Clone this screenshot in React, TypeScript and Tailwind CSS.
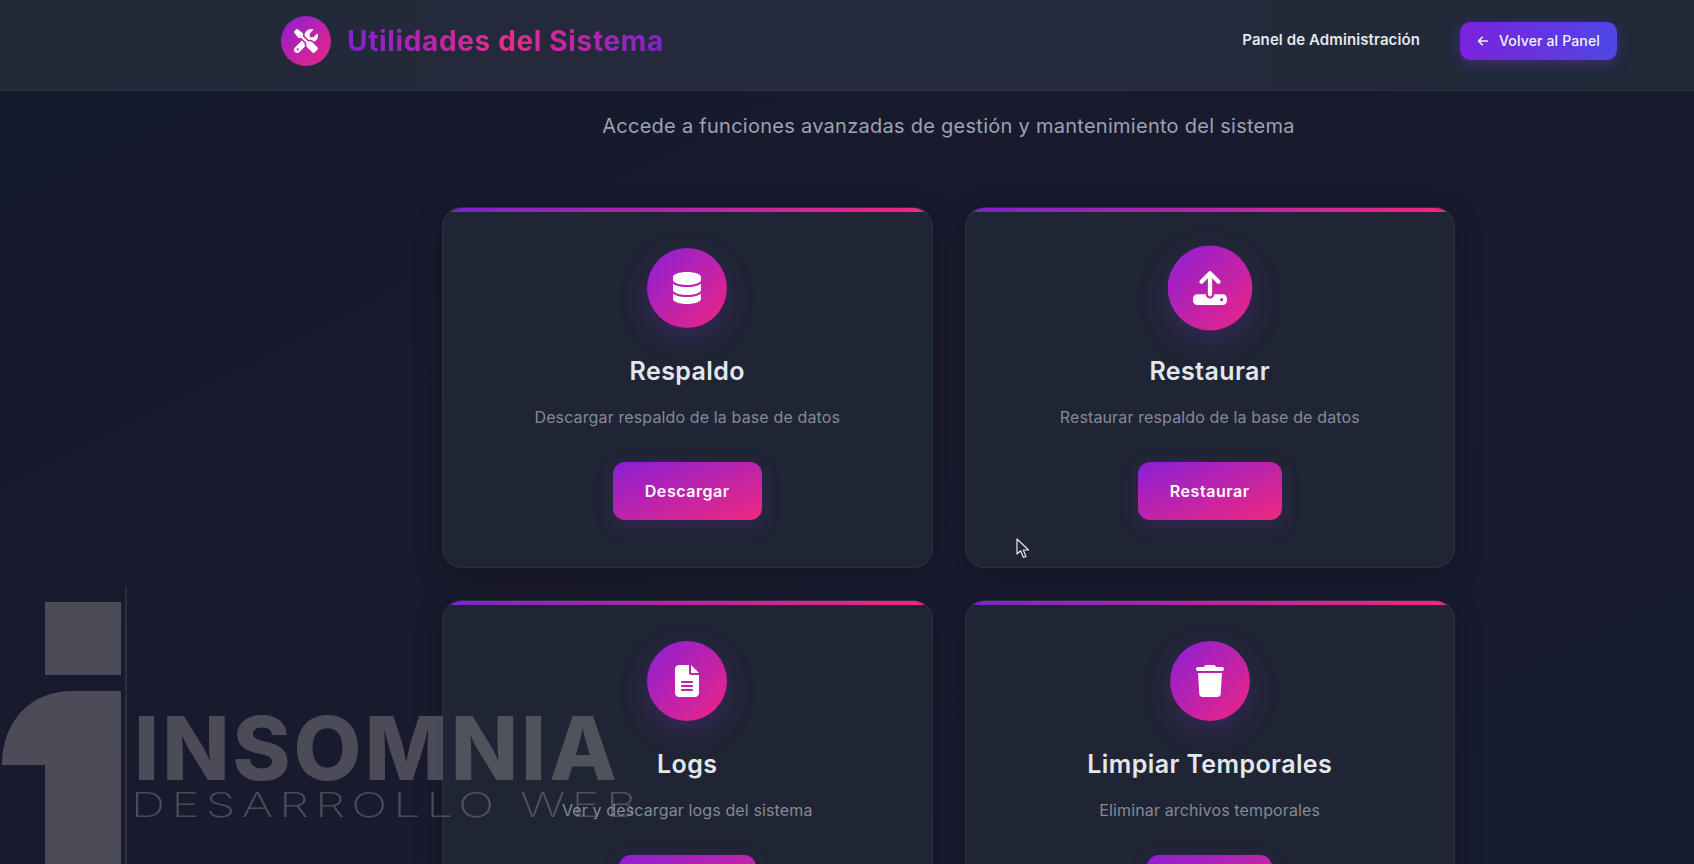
import { ReactNode } from 'react'
import {
  FaArrowLeft,
  FaDatabase,
  FaFileLines,
  FaScrewdriverWrench,
  FaTrash,
  FaUpload
} from 'react-icons/fa6'

interface UtilityCardProps {
  icon: ReactNode
  title: string
  description: string
  action: string
  active?: boolean
}

function UtilityCard({ icon, title, description, action, active }: UtilityCardProps) {
  return (
    <div className="relative flex h-[361px] flex-col items-center overflow-hidden rounded-[20px] border border-white/[0.06] bg-[#1f2534] pt-[40px] shadow-[0_8px_28px_rgba(0,0,0,0.25)]">
      <span className="absolute inset-x-0 top-0 h-1 bg-linear-to-r/srgb from-[#7e22ce] to-[#f0287f]" />
      <div
        className={`flex h-20 w-20 shrink-0 items-center justify-center rounded-full bg-linear-to-br/srgb from-[#8b1fd6] to-[#ee2582] text-[32px] text-white shadow-[0_10px_30px_rgba(147,51,234,0.22)] ${active ? 'scale-[1.06]' : ''}`}
      >
        {icon}
      </div>
      <h3 className="mt-[25px] text-[25px] leading-9 font-semibold tracking-[0.4px] text-[#e5e7eb]">
        {title}
      </h3>
      <p className="mt-[16px] text-[16px] leading-6 tracking-[0.13px] text-[#858a96]">
        {description}
      </p>
      <button className="mt-[33px] flex h-[58px] items-center rounded-xl bg-linear-to-br/srgb from-[#8b1fd6] to-[#f0287f] px-8 text-[16px] font-semibold tracking-[0.55px] text-white shadow-[0_6px_20px_rgba(147,51,234,0.18)]">
        {action}
      </button>
    </div>
  )
}

function Watermark() {
  return (
    <div className="pointer-events-none absolute top-[587px] left-0 flex h-[277px] w-[700px] text-[#999999]/40">
      <svg width="127" height="277" viewBox="0 0 127 277" className="shrink-0">
        <rect x="45" y="15" width="76" height="73" fill="currentColor" />
        <path
          d="M121 104 L121 277 L45 277 L45 178 L2 178 C2 135 30 104 72 104 Z"
          fill="currentColor"
        />
        <rect x="125" y="0" width="2" height="277" fill="currentColor" opacity="0.35" />
      </svg>
      <div className="flex flex-col pl-[6px]">
        <span className="mt-[117px] ml-[1px] text-[88px] leading-[88px] font-extrabold tracking-[3px]">
          INSOMNIA
        </span>
        <span className="-mt-[2px] -ml-[2px] origin-left scale-x-[1.4] text-[34px] leading-[30px] font-extralight tracking-[4.5px] whitespace-nowrap">
          DESARROLLO WEB
        </span>
      </div>
    </div>
  )
}

export default function App() {
  return (
    <div className="relative h-[864px] w-full overflow-hidden bg-linear-to-br from-[#141a2c] via-[#1a1a2e] to-[#161c30] font-['Inter',sans-serif]">
      <header className="flex h-[91px] items-center justify-between border-b border-white/5 bg-linear-to-r from-[#1f2937] via-[#262a3d] to-[#1f2937] pr-[77px] pb-[9px] pl-[281px]">
        <div className="flex items-center gap-4">
          <div className="flex h-[50px] w-[50px] items-center justify-center rounded-full bg-linear-to-br/srgb from-[#8b1fd6] to-[#ee2582] text-[24px] text-white">
            <FaScrewdriverWrench />
          </div>
          <h1 className="bg-linear-to-r/srgb from-[#7e22ce] via-[#ec2a8a] to-[#7e22ce] bg-clip-text text-[28px] font-bold tracking-[0.65px] text-transparent">
            Utilidades del Sistema
          </h1>
        </div>
        <div className="flex items-center gap-10">
          <span className="text-[15px] font-semibold tracking-[0.1px] text-[#e5e7eb]">
            Panel de Administración
          </span>
          <button className="flex h-[38px] w-[157px] items-center justify-center gap-[10px] rounded-[10px] bg-linear-to-r/srgb from-[#7c22dc] to-[#4f46e5] text-[14px] font-medium tracking-[0.15px] text-[#f3f4f6] shadow-[0_4px_14px_rgba(124,58,237,0.35)]">
            <FaArrowLeft className="text-[12px]" />
            Volver al Panel
          </button>
        </div>
      </header>

      <main className="pt-5 pl-[442px]">
        <div className="w-[1013px]">
          <p className="text-center text-[20px] leading-[30px] tracking-[0.27px] text-[#9ca3af]">
            Accede a funciones avanzadas de gestión y mantenimiento del sistema
          </p>
          <div className="mt-[66px] grid grid-cols-2 gap-8">
            <UtilityCard
              icon={<FaDatabase />}
              title="Respaldo"
              description="Descargar respaldo de la base de datos"
              action="Descargar"
            />
            <UtilityCard
              active
              icon={<FaUpload />}
              title="Restaurar"
              description="Restaurar respaldo de la base de datos"
              action="Restaurar"
            />
            <UtilityCard
              icon={<FaFileLines />}
              title="Logs"
              description="Ver y descargar logs del sistema"
              action="Ver Logs"
            />
            <UtilityCard
              icon={<FaTrash />}
              title="Limpiar Temporales"
              description="Eliminar archivos temporales"
              action="Limpiar"
            />
          </div>
        </div>
      </main>

      <Watermark />

      <svg
        width="14"
        height="21"
        viewBox="0 0 14 21"
        className="pointer-events-none absolute top-[538px] left-[1016px]"
      >
        <path
          d="M1 1 L1 16 L4.6 12.8 L7.4 19.5 L10 18.4 L7.3 12 L12.5 12 Z"
          fill="#1f2534"
          stroke="#e5e7eb"
          strokeWidth="1.2"
          strokeLinejoin="round"
        />
      </svg>
    </div>
  )
}
